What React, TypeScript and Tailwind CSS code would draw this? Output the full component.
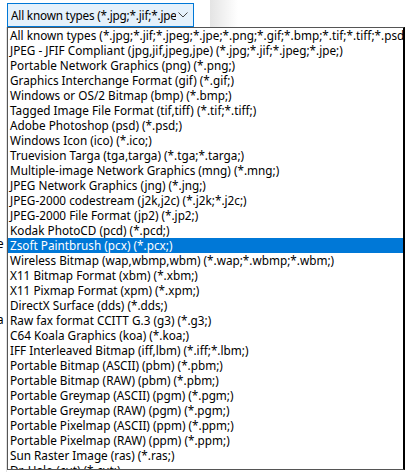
import React from 'react';

const items = [
  'All known types (*.jpg;*.jif;*.jpeg;*.jpe;*.png;*.gif;*.bmp;*.tif;*.tiff;*.psd;*.ico;*.tga;*.targa;*.mng;*.jng;*.j2k;*.j2c;*.jp2;*.pcd;*.pcx;*.wap;*.wbmp;*.wbm;)',
  'JPEG - JFIF Compliant (jpg,jif,jpeg,jpe) (*.jpg;*.jif;*.jpeg;*.jpe;)',
  'Portable Network Graphics (png) (*.png;)',
  'Graphics Interchange Format (gif) (*.gif;)',
  'Windows or OS/2 Bitmap (bmp) (*.bmp;)',
  'Tagged Image File Format (tif,tiff) (*.tif;*.tiff;)',
  'Adobe Photoshop (psd) (*.psd;)',
  'Windows Icon (ico) (*.ico;)',
  'Truevision Targa (tga,targa) (*.tga;*.targa;)',
  'Multiple-image Network Graphics (mng) (*.mng;)',
  'JPEG Network Graphics (jng) (*.jng;)',
  'JPEG-2000 codestream (j2k,j2c) (*.j2k;*.j2c;)',
  'JPEG-2000 File Format (jp2) (*.jp2;)',
  'Kodak PhotoCD (pcd) (*.pcd;)',
  'Zsoft Paintbrush (pcx) (*.pcx;)',
  'Wireless Bitmap (wap,wbmp,wbm) (*.wap;*.wbmp;*.wbm;)',
  'X11 Bitmap Format (xbm) (*.xbm;)',
  'X11 Pixmap Format (xpm) (*.xpm;)',
  'DirectX Surface (dds) (*.dds;)',
  'Raw fax format CCITT G.3 (g3) (*.g3;)',
  'C64 Koala Graphics (koa) (*.koa;)',
  'IFF Interleaved Bitmap (iff,lbm) (*.iff;*.lbm;)',
  'Portable Bitmap (ASCII) (pbm) (*.pbm;)',
  'Portable Bitmap (RAW) (pbm) (*.pbm;)',
  'Portable Greymap (ASCII) (pgm) (*.pgm;)',
  'Portable Greymap (RAW) (pgm) (*.pgm;)',
  'Portable Pixelmap (ASCII) (ppm) (*.ppm;)',
  'Portable Pixelmap (RAW) (ppm) (*.ppm;)',
  'Sun Raster Image (ras) (*.ras;)',
  'Dr. Halo (cut) (*.cut;)',
];

const selected = 14;

export default function App() {
  return (
    <div
      className="w-[405px] h-[472px] bg-white overflow-hidden flex flex-col text-[11.75px] text-black"
      style={{ fontFamily: '"Noto Sans", "Open Sans", sans-serif' }}
    >
      {/* combo row */}
      <div className="h-[27px] flex shrink-0">
        <div className="w-[7px]" />
        <div className="mt-[3px] w-[187px] h-[24px] border border-[#0078d7] bg-[#e5f1fb] flex items-center pl-[3px] pr-[5px]">
          <span className="flex-1 whitespace-nowrap overflow-hidden leading-[15px] tracking-[-0.2px]">All known types (*.jpg;*.jif;*.jpe</span>
          <svg width="10" height="6" viewBox="0 0 10 6" className="ml-[2px] shrink-0">
            <polyline points="0.5,0.5 5,5 9.5,0.5" fill="none" stroke="#444" strokeWidth="1" />
          </svg>
        </div>
        <div className="w-[16px]" />
        <div className="w-[28px] bg-gradient-to-r from-[#e4e4e4] to-white" />
      </div>

      {/* dropdown list */}
      <div className="flex flex-1 min-h-0">
        <div className="w-[7px] shrink-0 relative overflow-hidden border-r border-[#e3e3e3]">
          <span className="absolute left-[-3px] top-[211px] leading-none">e</span>
          <span className="absolute left-[-3px] top-[287px] leading-none">a</span>
        </div>
        <div className="flex-1 min-w-0 h-[443px] border border-[#555] border-r-2 border-r-black overflow-hidden">
          {items.map((t, i) => (
            <div
              key={i}
              className={`h-[15px] pl-[2px] whitespace-nowrap overflow-hidden leading-[15px] ${
                i === selected ? 'bg-[#0078d7] text-white' : ''
              }`}
            >
              {t}
            </div>
          ))}
        </div>
      </div>
    </div>
  );
}
